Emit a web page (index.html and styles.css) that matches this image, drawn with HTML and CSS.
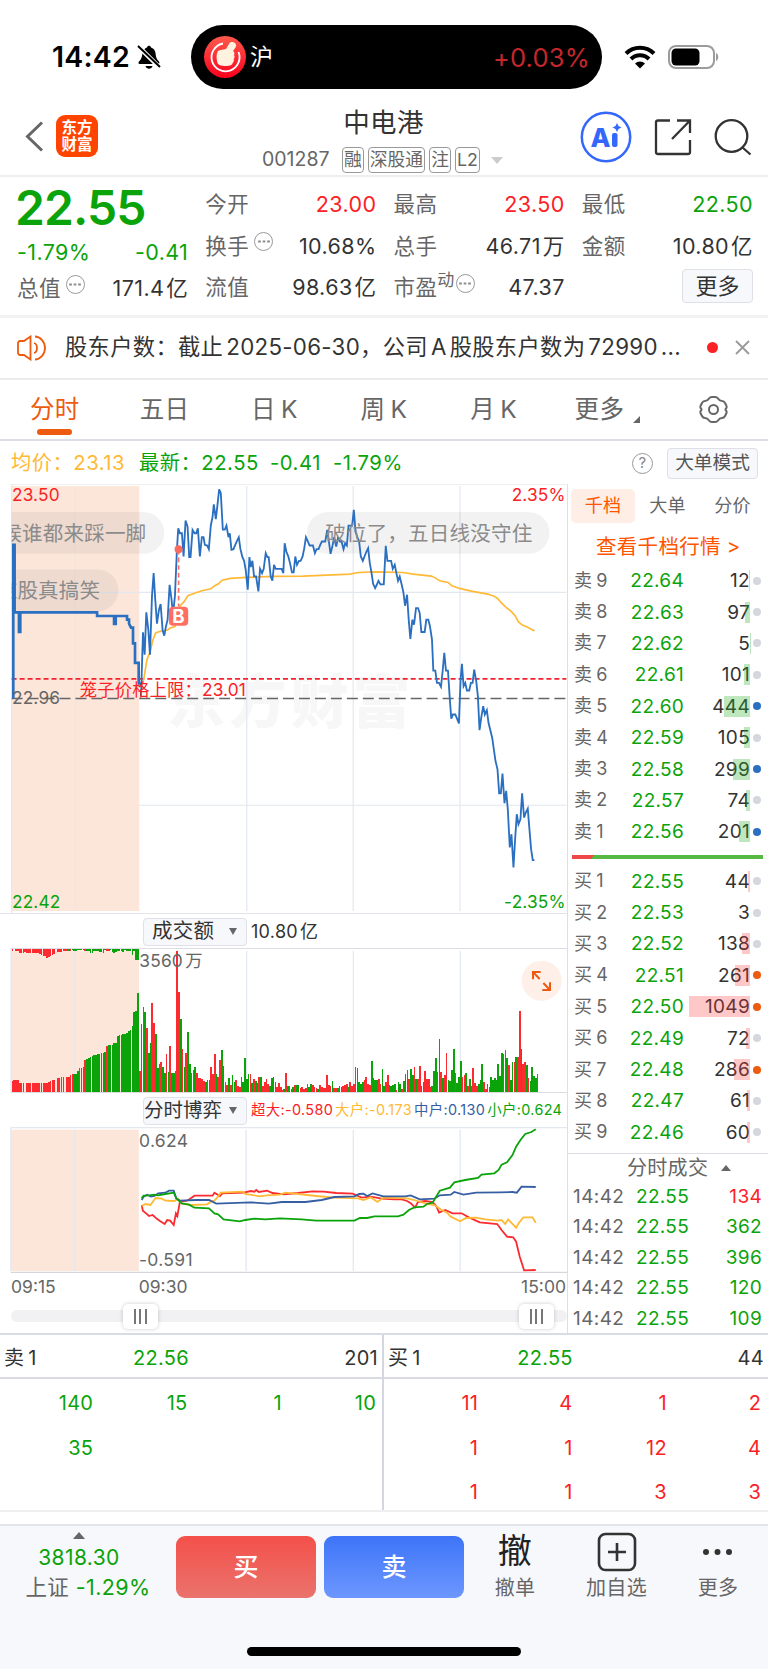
FILE: index.html
```html
<!DOCTYPE html>
<html lang="zh-CN">
<head>
  <meta charset="UTF-8">
  <meta name="viewport" content="width=device-width, initial-scale=1.0">
  <title>中电港 001287</title>
  <link rel="stylesheet" href="styles.css">
</head>
<body>
  <div class="status">
    <span class="time">14:42</span>
    <svg class="bell" width="24" height="26" viewBox="0 0 24 26">
      <path d="M3 20c-2 0-2-1.500-.5-3C5 14 5 12 5.500 9 6 5.500 8.500 4 10 3.500c.5-2.500 3.500-2.500 4 0 2 .5 4.200 2.500 4.500 5.500.4 4 1 6 3 8 1.500 1.500 1 3-.5 3z"/>
      <path d="M8.500 22h7c-.8 3.500-6.200 3.500-7 0z"/>
      <path d="M1 2l22 22" stroke="#fff" stroke-width="4.500"/>
      <path d="M1 2l22 21" stroke="#000" stroke-width="2"/>
    </svg>
    <div class="island">
      <svg width="42" height="42" viewBox="0 0 42 42">
        <defs><linearGradient id="thumb" x1="0" y1="0" x2="0" y2="1"><stop offset="0" stop-color="#ff5a4c"/><stop offset="1" stop-color="#f8001d"/></linearGradient></defs>
        <circle cx="21" cy="21" r="21" fill="url(#thumb)"/>
        <path d="M19 7.500A14 14 0 1 0 34.500 16" fill="none" stroke="#fff" stroke-width="1.800"/>
        <path d="M14 15c2-1.500 5-1 8-2l3-5c1-2 3-2.500 5-1.500 2.500 1 2.500 3 1.500 5L29 15c2 1.500 1.500 3 1 4 1 1.500.5 3-.3 4 .5 1.500 0 3-.9 3.700C28.500 29 26 30 22 30c-5 0-8.500-.5-9-5-.6-3-.8-7 1-10z" fill="#fff3df"/>
      </svg>
      <span class="hu">沪</span>
      <span class="hu-change">+0.03%</span>
    </div>
    <svg class="wifi" width="32" height="24" viewBox="0 0 32 24">
      <path d="M2 8.500a20 20 0 0 1 28 0M7 14a12.800 12.800 0 0 1 18 0" fill="none" stroke="#000" stroke-width="4"/>
      <path d="M16 23.500l-5-5a7 7 0 0 1 10 0z"/>
    </svg>
    <svg class="battery" width="52" height="24" viewBox="0 0 52 24">
      <rect x="1" y="1" width="45" height="22" rx="7" fill="none" stroke="#9b9b9b" stroke-width="2"/>
      <rect x="3.500" y="3.500" width="28" height="17" rx="4.500"/>
      <path d="M48 8c3 1 3 7 0 8z" fill="#9b9b9b"/>
    </svg>
  </div>

  <header class="header">
    <svg class="back" width="19" height="31" viewBox="0 0 19 31"><path d="M17 1.500L2.500 15.500 17 29.500" fill="none" stroke="#666" stroke-width="3"/></svg>
    <div class="logo">东方<br>财富</div>
    <div class="title">
      <h1>中电港</h1>
      <div class="code"><span>001287</span><i>融</i><i>深股通</i><i>注</i><i>L2</i><b class="caret"></b></div>
    </div>
    <svg class="tools" width="172" height="52" viewBox="0 0 172 52">
      <circle cx="26" cy="26" r="24.200" fill="none" stroke="#3468fb" stroke-width="2.500"/>
      <text x="10.500" y="36" class="ai">A</text>
      <rect x="32" y="22" width="5.500" height="14" rx="2" fill="#3468fb"/>
      <path d="M37 12l1.500 3 3 1.500-3 1.500-1.500 3-1.500-3-3-1.500 3-1.500z" fill="#3468fb"/>
      <g fill="none" stroke="#333" stroke-width="2.300">
        <path d="M90 9.500H78a2 2 0 0 0-2 2V41a2 2 0 0 0 2 2h30a2 2 0 0 0 2-2V29M97 9.500h13V22M109.500 10L92 28"/>
        <circle cx="151.500" cy="25" r="15.800"/>
        <path d="M162.500 36.500l8 7"/>
      </g>
    </svg>
  </header>

  <section class="quote">
    <div class="col">
      <strong class="last">22.55</strong>
      <p class="green change"><span>-1.79%</span><span>-0.41</span></p>
      <p><label>总值<i class="dots"></i></label><span>171.4<em>亿</em></span></p>
    </div>
    <div class="col">
      <p><label>今开</label><span class="red">23.00</span></p>
      <p><label>换手<i class="dots"></i></label><span>10.68%</span></p>
      <p><label>流值</label><span>98.63<em>亿</em></span></p>
    </div>
    <div class="col">
      <p><label>最高</label><span class="red">23.50</span></p>
      <p><label>总手</label><span>46.71<em>万</em></span></p>
      <p><label>市盈<sup>动</sup><i class="dots tight"></i></label><span>47.37</span></p>
    </div>
    <div class="col">
      <p><label>最低</label><span class="green">22.50</span></p>
      <p><label>金额</label><span>10.80<em>亿</em></span></p>
      <p class="end"><button class="btn more">更多</button></p>
    </div>
  </section>

  <div class="notice">
    <svg width="30" height="26" viewBox="0 0 30 26" fill="none" stroke="#ee5a0f" stroke-width="1.800">
      <path d="M13.500 1.500v23L7 20H3a2 2 0 0 1-2-2V8a2 2 0 0 1 2-2h4zM17 8c4 1 4 9 0 10M18 1.500c5 0 10 5 10 11.500s-5 11.500-10 11.500"/>
    </svg>
    <span class="notice-text">股东户数：截止 2025-06-30，公司 A 股股东户数为 72990 ...</span>
    <b class="reddot"></b>
    <svg width="15" height="15" viewBox="0 0 15 15"><path d="M1 1l13 13M14 1L1 14" stroke="#999" stroke-width="1.800"/></svg>
  </div>

  <nav class="tabs">
    <a class="active">分时</a><a>五日</a><a>日 K</a><a>周 K</a><a>月 K</a><a class="tab-more">更多<b class="corner"></b></a>
    <a><svg width="29" height="27" viewBox="0 0 29 27" fill="none" stroke="#666" stroke-width="2">
      <path d="M10 2.500Q11 1 13 1h3q2 0 3 1.500Q20.500 5 23 5q2 0 3 2l1.300 2.500q.8 2-.3 3-1 1 0 2 1.100 1 .3 3L26 20q-1 2-3 2-2.500 0-4 2.500-1 1.500-3 1.500h-3q-2 0-3-1.500Q8.500 22 6 22q-2 0-3-2l-1.300-2.500q-.8-2 .3-3 1-1 0-2-1.100-1-.3-3L3 7q1-2 3-2 2.500 0 4-2.500z"/><circle cx="14.500" cy="13.500" r="4.500"/>
    </svg></a>
  </nav>

  <div class="info">
    <span class="avg">均价：23.13</span>
    <span class="green newest">最新：22.55</span><span class="green delta">-0.41</span><span class="green delta">-1.79%</span>
    <b class="help">?</b>
    <button class="btn mode">大单模式</button>
  </div>

  <main class="market">
    <div class="charts">
      <svg class="price" viewBox="0 12 1701 1290">
        <path d="M33 12H1701" stroke="#e9e9ea" stroke-width="5"/>
        <rect x="33" y="18" width="384" height="1278" fill="#fce6da"/>
        <text class="mark" x="500" y="732">东方财富</text>
        <path class="grid" d="M33 12V1302M225 18V1296M740 18V1296M1060 18V1296M1381 18V1296M33 338H1701M417 978H1701"/>
        <clipPath id="area"><rect x="33" y="12" width="1668" height="1290"/></clipPath>
        <g clip-path="url(#area)">
          <rect class="pill" x="-90" y="96" width="582" height="126" rx="63"/>
          <rect class="pill" x="-90" y="269" width="444" height="126" rx="63"/>
          <rect class="pill" x="921" y="96" width="729" height="126" rx="63"/>
          <text class="say" x="2" y="182">候谁都来踩一脚</text>
          <text class="say" x="-12" y="355">这股真搞笑</text>
        </g>
        <path d="M33 598H1701" stroke="#f5222d" stroke-width="5" stroke-dasharray="15 9"/>
        <path d="M33 657H1701" stroke="#666" stroke-width="5" stroke-dasharray="33 15"/>
        <polyline fill="none" stroke="#ffb935" stroke-width="5" points="421,625 430,600 440,540 450,515 458,480 466,460 480,455 500,452 510,445 524,441 530,400 540,378 552,365 563,348 585,340 605,333 632,327 645,317 655,312 665,302 690,296 740,293 820,290 910,289 980,286 1050,283 1075,278 1130,276 1210,278 1240,283 1295,289 1308,295 1320,303 1345,308 1357,318 1380,326 1415,334 1465,343 1485,350 1495,357 1505,369 1520,383 1535,395 1547,408 1557,427 1570,437 1585,443 1605,454"/>
        <polyline class="line pre" points="38,657 38,195 42,195 42,398 55,398 55,457 59,457 59,398 290,398 290,409 341,409 341,433 346,433 346,409 380,409 380,420 386,420 386,432 392,444 398,444 398,491 404,491 404,550 415,550 415,612 423,612"/>
        <polyline class="line" points="422,650 428,458 433,525 438,398 444,450 449,525 455,350 460,280 465,362 470,432 476,390 481,373 487,452 492,468 497,440 502,420 508,315 514,360 518,405 524,350 530,210 534,145 539,160 545,160 550,230 556,122 562,140 567,232 571,232 577,150 583,160 588,160 593,145 599,230 605,172 610,172 614,195 621,197 626,208 632,136 637,112 641,73 647,118 652,75 657,28 662,40 668,149 674,149 679,137 685,172 689,160 694,210 700,208 705,196 711,182 716,172 721,208 727,232 732,243 737,272 743,330 748,232 752,262 757,243 762,290 768,290 775,335 780,267 786,280 791,267 797,220 802,232 806,232 812,290 817,303 822,255 827,267 845,267 850,280 854,190 859,215 865,230 870,250 876,278 881,278 886,230 891,255 897,243 902,243 908,230 913,205 918,172 924,185 929,197 939,197 945,220 950,208 956,208 961,195 966,185 976,185 982,150 987,185 992,222 998,197 1003,172 1009,200 1014,175 1020,185 1025,185 1031,208 1036,190 1041,197 1046,137 1057,137 1062,90 1067,155 1073,172 1078,185 1083,230 1089,243 1094,230 1100,215 1105,205 1110,250 1115,278 1120,312 1126,325 1131,315 1136,303 1142,314 1152,314 1158,198 1163,243 1174,243 1179,267 1185,255 1190,280 1195,303 1200,290 1206,315 1211,338 1216,378 1222,345 1227,420 1232,478 1238,420 1243,435 1249,385 1255,385 1260,400 1265,457 1275,457 1280,420 1286,420 1291,440 1297,480 1301,573 1307,573 1312,610 1318,610 1324,622 1329,575 1334,520 1339,573 1345,573 1350,650 1355,718 1360,705 1367,705 1372,717 1378,732 1383,600 1387,553 1392,620 1397,610 1402,633 1409,633 1414,610 1419,610 1424,570 1430,605 1435,650 1440,752 1445,715 1451,680 1456,705 1462,692 1467,730 1478,775 1483,810 1488,845 1494,870 1499,942 1504,942 1509,883 1515,972 1520,935 1525,990 1531,1105 1536,1065 1542,1165 1547,1080 1552,1005 1557,1035 1563,1020 1568,942 1574,1015 1579,1000 1585,988 1590,1050 1595,1110 1600,1143 1605,1143"/>
        <text class="say" x="976" y="182">破位了，五日线没守住</text>
        <path d="M535 210V380" stroke="#ff6f61" stroke-width="5" stroke-dasharray="14 9"/>
        <circle cx="535" cy="208" r="12" fill="#fb6a5c"/>
        <rect x="506" y="381" width="58" height="57" rx="12" fill="#ff6f61"/>
        <text class="buy-mark" x="516" y="429">B</text>
        <text class="tick red" x="34" y="63">23.50</text>
        <text class="tick red right" x="1699" y="63">2.35%</text>
        <text class="tick" x="34" y="675">22.96</text>
        <text class="tick red" x="238" y="650">笼子价格上限：23.01</text>
        <text class="tick green" x="34" y="1286">22.42</text>
        <text class="tick green right" x="1699" y="1286">-2.35%</text>
      </svg>

      <div class="panel-head">
        <div class="select">成交额<b></b></div>
        <span class="amount">10.80<em>亿</em></span>
      </div>
      <svg class="volume" viewBox="0 114 1701 435">
        <rect x="33" y="122" width="384" height="427" fill="#fce6da"/>
        <path class="grid" d="M33 114V549M225 122V548M740 122V548M1060 122V548M1381 122V548"/>
        <path d="M33 115H1701M33 548H1701" stroke="#dcdce2" stroke-width="4"/>
        <g id="bars" shape-rendering="crispEdges"></g>
        <text class="tick spaced" x="418" y="172">3560 万</text>
        <circle cx="1625" cy="212" r="60" fill="#fef0e9"/>
        <path d="M1599 208V186H1622M1599 186L1619 207M1650 217V240H1627M1650 240L1630 219" fill="none" stroke="#ee5a0f" stroke-width="6"/>
      </svg>

      <div class="panel-head">
        <div class="select wide">分时博弈<b></b></div>
        <div class="legend"><span class="red">超大:-0.580</span><span class="c-big">大户:-0.173</span><span class="c-mid">中户:0.130</span><span class="green">小户:0.624</span></div>
      </div>
      <div class="flow-wrap">
        <svg class="flow" viewBox="0 111 1560 438" preserveAspectRatio="none">
          <rect x="30" y="119" width="352" height="424" fill="#fce6da"/>
          <path class="grid" d="M30 112V543M206 119V543M677 119V543M972 119V543M1266 119V543M30 113H1560"/>
          <path d="M30 547H1560" stroke="#d5d5dc" stroke-width="4"/>
          <polyline stroke="#fb2b30" points="390,345 393,362 402,370 410,378 420,375 430,385 440,393 453,402 460,390 468,392 478,405 484,370 488,378 495,335 515,332 525,325 535,317 585,317 590,308 605,318 612,310 670,308 690,303 700,305 705,300 712,306 735,302 750,309 780,313 820,309 860,304 890,305 925,309 970,311 995,323 1020,320 1050,326 1085,328 1105,328 1120,333 1130,340 1142,352 1150,336 1170,333 1190,336 1200,348 1208,368 1225,360 1245,370 1270,370 1290,382 1320,397 1368,402 1380,420 1395,440 1412,442 1420,455 1430,500 1442,541 1474,540"/>
          <polyline stroke="#ffb935" points="390,348 400,342 414,345 428,324 445,326 455,332 480,333 490,326 500,340 525,345 570,343 580,335 590,332 600,320 607,308 668,305 675,312 715,319 735,316 770,314 785,308 805,310 870,318 920,323 985,325 1000,330 1020,322 1038,336 1055,323 1120,325 1140,330 1170,340 1195,345 1215,360 1230,368 1240,380 1266,394 1282,384 1310,383 1335,388 1370,392 1380,390 1390,402 1398,388 1420,413 1428,398 1440,382 1465,382 1474,398"/>
          <polyline stroke="#365fa3" points="390,330 395,320 405,314 415,320 425,318 435,310 455,308 465,302 478,302 485,325 495,332 540,330 575,330 595,341 690,337 740,341 775,336 840,336 885,330 920,321 975,319 988,312 1000,311 1010,318 1025,310 1055,319 1115,319 1130,316 1155,328 1195,326 1210,316 1240,314 1250,306 1275,314 1310,308 1375,307 1410,306 1422,308 1435,290 1474,291"/>
          <polyline stroke="#0aa30a" points="390,325 395,317 410,316 425,314 435,316 455,312 478,308 485,325 500,340 520,344 535,353 575,355 590,370 600,373 615,388 660,394 675,390 700,386 730,388 770,385 830,388 870,392 950,392 975,392 990,384 1010,384 1030,379 1095,379 1110,374 1125,360 1140,352 1165,350 1175,342 1190,338 1210,302 1238,293 1250,277 1280,270 1315,264 1325,254 1360,250 1372,240 1380,224 1395,217 1410,195 1420,170 1432,150 1445,132 1462,126 1474,118"/>
        </svg>
        <span class="hi">0.624</span>
        <span class="lo">-0.591</span>
      </div>
      <div class="axis"><span>09:15</span><span class="open">09:30</span><span class="close">15:00</span></div>
      <div class="slider"><b class="thumb"></b><b class="thumb"></b></div>
    </div>

    <aside class="book">
      <div class="book-tabs"><a class="active">千档</a><a>大单</a><a>分价</a></div>
      <div class="book-link">查看千档行情 &gt;</div>
      <div id="sells"></div>
      <div class="ratio"></div>
      <div id="buys"></div>
      <div class="deals">
        <div class="deals-head">分时成交<b></b></div>
        <div id="deals"></div>
      </div>
    </aside>
  </main>

  <section class="queue">
    <div class="side">
      <div class="side-head"><span>卖 1</span><span class="green">22.56</span><span>201</span></div>
      <div class="cells green"><span>140</span><span>15</span><span>1</span><span>10</span><span>35</span></div>
    </div>
    <div class="side">
      <div class="side-head"><span>买 1</span><span class="green">22.55</span><span>44</span></div>
      <div class="cells red"><span>11</span><span>4</span><span>1</span><span>2</span><span>1</span><span>1</span><span>12</span><span>4</span><span>1</span><span>1</span><span>3</span><span>3</span></div>
    </div>
  </section>

  <footer class="bottom">
    <div class="index">
      <b></b>
      <span class="green">3818.30</span>
      <span>上证 <em class="green">-1.29%</em></span>
    </div>
    <button class="trade buy">买</button>
    <button class="trade sell">卖</button>
    <div class="action"><span class="glyph">撤</span>撤单</div>
    <div class="action add">
      <svg width="40" height="40" viewBox="0 0 40 40" fill="none" stroke="#333" stroke-width="2.600"><rect x="2" y="2" width="36" height="36" rx="6.500"/><path d="M20 11v18M11 20h18"/></svg>加自选
    </div>
    <div class="action">
      <svg width="40" height="40" viewBox="0 0 40 40" fill="#333"><circle cx="8" cy="20" r="3"/><circle cx="19.500" cy="20" r="3"/><circle cx="31" cy="20" r="3"/></svg>更多
    </div>
    <div class="home"></div>
  </footer>

  <script src="chart.js"></script>
</body>
</html>
```

FILE: styles.css
```css
* {
  box-sizing: border-box;
}
body {
  margin: 0;
  width: 768px;
  height: 1669px;
  overflow: hidden;
  background: #fff;
  color: #333;
  font-family: Inter, "Noto Sans CJK SC", sans-serif;
  font-size: 20px;
  letter-spacing: 0.3px;
  line-height: 1;
}
p, h1 {
  margin: 0;
}
i, em {
  font-style: normal;
}
button {
  font-family: inherit;
  padding: 0;
}
svg {
  display: block;
  flex: none;
}
.green { color: #0aa30a; fill: #0aa30a; }
.red { color: #fb2226; fill: #fb2226; }

/* status bar */
.status {
  display: flex;
  align-items: center;
  height: 98px;
  padding: 15px 48px 0 52px;
}
.time {
  width: 85px;
  padding-top: 2px;
  font-size: 28.500px;
  font-weight: 600;
  letter-spacing: 0.2px;
  color: #000;
}
.island {
  display: flex;
  align-items: center;
  width: 411px;
  height: 64px;
  margin: 0 22px 0 30px;
  padding: 0 12px 0 13px;
  border-radius: 32px;
  background: #000;
}
.hu {
  margin: 2px 0 0 4px;
  font-size: 23px;
  color: #fff;
}
.hu-change {
  margin: 2px 0 0 auto;
  font-size: 25.500px;
  letter-spacing: 0.2px;
  color: #c4272b;
}
.battery {
  margin-left: 12px;
}

/* header */
.header {
  display: flex;
  align-items: flex-start;
  height: 79px;
  padding: 13px 16px 0 25px;
  border-bottom: 2px solid #eeeeef;
}
.back {
  margin-top: 10px;
}
.logo {
  width: 42px;
  height: 42px;
  margin: 4px 0 0 12px;
  padding-top: 4px;
  border-radius: 9px;
  background: #ff4400;
  color: #fff;
  font-size: 15.500px;
  font-weight: 700;
  letter-spacing: 0;
  line-height: 17px;
  text-align: center;
}
.title {
  flex: 1;
  width: 0;
  margin-left: 164px;
}
.title h1 {
  width: 243px;
  margin: -3px 0 11px;
  font-size: 26.500px;
  font-weight: 400;
  text-align: center;
  line-height: 28px;
}
.code {
  display: flex;
  align-items: center;
  width: 260px;
  font-size: 19.500px;
  color: #666;
}
.code span {
  width: 75px;
  margin-right: 5px;
  letter-spacing: 0;
}
.code i {
  height: 26px;
  margin-right: 4px;
  padding: 0 1px;
  border: 1.500px solid #999;
  border-radius: 4px;
  font-size: 17.800px;
  letter-spacing: 0;
  line-height: 24px;
}
.caret {
  margin-left: 7px;
  border: 6px solid transparent;
  border-top: 7px solid #ccc;
  border-bottom: 0;
}
.ai {
  font-size: 26px;
  font-weight: 800;
  fill: #3468fb;
}

/* quote */
.quote {
  display: grid;
  grid-template-columns: repeat(4, 1fr);
  gap: 17px;
  height: 141px;
  padding: 7px 15px 0 17px;
  border-bottom: 3px solid #f2f2f3;
}
.col p {
  display: flex;
  align-items: center;
  justify-content: space-between;
  height: 41.500px;
  font-size: 21.500px;
  letter-spacing: 0.4px;
  white-space: nowrap;
}
.col em, .amount em {
  margin-left: 2px;
}
.col label {
  display: flex;
  align-items: center;
  color: #666;
  font-size: 21.500px;
}
.col .end {
  justify-content: flex-end;
}
.last {
  display: block;
  height: 50px;
  margin-left: -2px;
  font-size: 48px;
  line-height: 47px;
  font-weight: 600;
  letter-spacing: -0.900px;
  color: #0aa30a;
}
.col .change {
  height: 34px;
  padding-top: 3px;
}
.dots {
  width: 19px;
  height: 19px;
  margin: -9px 0 0 5px;
  border: 1.500px solid #999;
  border-radius: 50%;
  background: radial-gradient(circle, #888 1px, transparent 1.500px) center / 4.500px 20px repeat-x content-box;
  padding: 0 1.500px;
}
.dots.tight {
  margin-left: 1px;
}
.col sup {
  margin-top: -14px;
  font-size: 17px;
}
.btn {
  border: 1.500px solid #dfdfe7;
  border-radius: 4px;
  background: #f7f8fb;
  color: #333;
}
.more {
  width: 71px;
  height: 34px;
  margin-top: -4px;
  font-size: 22px;
  line-height: 30px;
}

/* notice */
.notice {
  display: flex;
  align-items: center;
  height: 62px;
  padding: 0 18px 1px 17px;
  border-bottom: 2px solid #ebebed;
}
.notice-text {
  width: 630px;
  margin-left: 18px;
  font-size: 22.300px;
  word-spacing: -3.500px;
  white-space: nowrap;
}
.reddot {
  width: 11px;
  height: 11px;
  margin: 0 17px 0 13px;
  border-radius: 50%;
  background: #fb2226;
  flex: none;
}

/* tabs */
.tabs {
  display: grid;
  grid-template-columns: repeat(7, 1fr);
  height: 61px;
  border-bottom: 2px solid #dedfe6;
}
.tabs a {
  position: relative;
  display: flex;
  align-items: center;
  justify-content: center;
  font-size: 24.500px;
  word-spacing: -2px;
  color: #666;
}
.tabs .active {
  color: #ee5a0f;
}
.tabs .active::after {
  content: "";
  position: absolute;
  bottom: 4px;
  width: 35px;
  height: 6px;
  border-radius: 3px;
  background: #ee5a0f;
}
.tabs .tab-more {
  padding-right: 8px;
}
.corner {
  position: absolute;
  right: 18px;
  bottom: 16px;
  border-left: 7px solid transparent;
  border-bottom: 7px solid #666;
}

/* info line */
.info {
  display: flex;
  align-items: center;
  height: 43px;
  padding: 1px 10px 0 11px;
  font-size: 20.300px;
  letter-spacing: 0.5px;
  white-space: nowrap;
}
.avg { color: #ffb935; width: 128px; }
.newest { width: 119px; }
.delta { margin-left: 12px; }
.help {
  width: 21px;
  height: 21px;
  margin: 0 14px 0 auto;
  border: 1.500px solid #999;
  border-radius: 50%;
  font-size: 15px;
  font-weight: 400;
  line-height: 18px;
  text-align: center;
  color: #888;
}
.mode {
  width: 91px;
  height: 31px;
  font-size: 18.700px;
  line-height: 26px;
  color: #555;
}

/* charts */
.market {
  display: flex;
  height: 849px;
}
.charts {
  width: 568px;
  border-right: 1px solid #dedfe6;
}
.price {
  width: 567px;
  height: 430px;
  border-bottom: 1px solid #e3e4ea;
}
.volume {
  width: 567px;
  height: 145px;
}
.grid {
  fill: none;
  stroke: #e2e7f0;
  stroke-width: 3.500;
}
.line {
  fill: none;
  stroke: #2b6fc0;
  stroke-width: 5.500;
}
.pre {
  stroke-width: 8;
}
.mark {
  font-size: 174px;
  font-weight: 900;
  letter-spacing: 12px;
  fill: #f7f7f7;
}
.pill {
  fill: rgba(60, 60, 60, 0.065);
}
.say {
  font-size: 61.800px;
  letter-spacing: 0.5px;
  fill: #8b8b8b;
}
.tick {
  font-size: 52px;
  letter-spacing: 0.5px;
  fill: #666;
}
.spaced {
  word-spacing: -8px;
}
.tick.red { fill: #fb2226; }
.tick.green { fill: #0aa30a; }
.right {
  text-anchor: end;
}
.buy-mark {
  font-size: 56px;
  font-weight: 700;
  fill: #fff;
}
.panel-head {
  display: flex;
  align-items: center;
  height: 34px;
  padding: 1px 0 0 143px;
}
.select {
  display: flex;
  align-items: center;
  justify-content: space-between;
  width: 104px;
  height: 28px;
  padding: 0 9px 0 8px;
  border: 1.500px solid #dfe0e8;
  border-radius: 4px;
  background: #f7f8fb;
  font-size: 20.500px;
}
.select.wide {
  padding: 0 9px 0 0;
  font-size: 19.500px;
  letter-spacing: 0;
}
.select b {
  border: 4px solid transparent;
  border-top: 7px solid #666;
  border-bottom: 0;
}
.amount {
  margin-left: 4px;
  font-size: 18px;
}
.legend {
  display: flex;
  gap: 2px;
  margin-left: 4px;
  font-size: 14.400px;
  letter-spacing: 0.35px;
  white-space: nowrap;
}
.c-big { color: #ffb935; }
.c-mid { color: #365fa3; }
.flow-wrap {
  position: relative;
  height: 146px;
  font-size: 17.500px;
  color: #666;
}
.flow {
  width: 567px;
  height: 146px;
}
.flow polyline {
  fill: none;
  stroke-width: 1.800;
  vector-effect: non-scaling-stroke;
}
.hi, .lo {
  position: absolute;
  left: 139px;
}
.hi { top: 5px; }
.lo { bottom: 5px; }
.axis {
  display: flex;
  height: 30px;
  padding: 5px 1px 0 11px;
  font-size: 17.500px;
  letter-spacing: 0;
  color: #666;
}
.open {
  margin-left: 83px;
}
.close {
  margin-left: auto;
}
.slider {
  display: flex;
  align-items: center;
  justify-content: space-between;
  height: 12px;
  margin: 7px 0 0 11px;
  padding: 0 13px 0 112px;
  border-radius: 6px;
  background: #f1f1f4;
}
.thumb {
  width: 35px;
  height: 25px;
  padding: 5px 11px;
  border-radius: 5px;
  background: repeating-linear-gradient(90deg, #777 0 2px, transparent 2px 5.500px) content-box, #fff;
  box-shadow: 0 0 4px rgba(0, 0, 0, 0.2);
}

/* order book */
.book {
  width: 200px;
}
.book-tabs {
  display: flex;
  align-items: center;
  height: 34px;
  margin: 5px 0 0 3px;
  font-size: 18px;
  color: #666;
}
.book-tabs a {
  width: 64px;
  line-height: 34px;
  border-radius: 5px;
  text-align: center;
}
.book-tabs .active {
  background: #feeee6;
  color: #ff5500;
}
.book-tabs a + a {
  width: 65px;
}
.book-link {
  height: 42px;
  padding-left: 28px;
  font-size: 20.500px;
  line-height: 48px;
  color: #ff5500;
  white-space: nowrap;
}
.row {
  display: flex;
  align-items: center;
  height: 31.400px;
  padding: 0 7px 0 6px;
  font-size: 19px;
}
.row .name {
  width: 45px;
  color: #666;
  font-size: 18px;
  word-spacing: -1.500px;
}
.row .price-cell {
  width: 65px;
  text-align: right;
}
.row .num {
  position: relative;
  width: 66px;
  height: 21px;
  text-align: right;
  line-height: 21px;
}
.num u {
  position: absolute;
  right: 0;
  top: 0;
  height: 21px;
}
#sells u { background: rgba(40, 175, 40, 0.3); }
#buys u { background: rgba(250, 50, 50, 0.27); }
.row .dot {
  width: 8px;
  height: 8px;
  margin-left: 3px;
  border-radius: 50%;
  background: #d5d7de;
}
#sells .big { background: #2b6fc0; }
#buys .big { background: #ee5a0f; }
.ratio {
  height: 4px;
  margin: 7px 5px 7px 4px;
  background: linear-gradient(120deg, #ee4848 0 19px, #57b944 19px);
}
.deals {
  margin-top: 5px;
  border-top: 1.500px solid #dcdce2;
}
.deals-head {
  display: flex;
  align-items: center;
  height: 27px;
  padding-left: 59px;
  font-size: 20px;
  color: #666;
}
.deals-head b {
  margin-left: 13px;
  border: 5px solid transparent;
  border-bottom: 6px solid #666;
  border-top: 0;
}
.deal {
  display: flex;
  align-items: center;
  height: 30.500px;
  padding: 0 6px 0 5px;
  font-size: 19px;
}
.deal span:first-child {
  width: 63px;
  font-size: 19px;
  letter-spacing: 0.4px;
  color: #666;
}
.deal span:last-child {
  margin-left: auto;
}

/* queue */
.queue {
  display: flex;
  height: 179px;
  border-top: 2px solid #d9dce4;
  border-bottom: 2px solid #f0f0f2;
}
.side {
  width: 384px;
}
.side:first-child {
  border-right: 2px solid #d5d7e0;
}
.side-head {
  display: grid;
  grid-template-columns: 94px 1fr 94px;
  align-items: center;
  height: 44px;
  padding: 3px 4px 0;
  border-bottom: 2px solid #d9dae3;
  word-spacing: -2px;
}
.side-head span:nth-child(2) {
  width: 126px;
  text-align: center;
}
.side-head span:last-child { text-align: right; }
.cells {
  display: grid;
  grid-template-columns: repeat(4, 94.300px);
  grid-auto-rows: 44.500px;
  align-items: center;
  padding-top: 2px;
}
.side:first-child .cells {
  margin-left: -1px;
}
.cells span {
  text-align: right;
}

/* bottom bar */
.bottom {
  display: flex;
  flex-wrap: wrap;
  align-content: flex-start;
  height: 145px;
  margin-top: 12px;
  padding: 6px 0 0 17px;
  border-top: 2px solid #e1e4ea;
  background: #f7f8fb;
}
.index {
  display: flex;
  flex-direction: column;
  align-items: center;
  gap: 9px;
  width: 142px;
  font-size: 21.500px;
  letter-spacing: 0.4px;
  color: #666;
  white-space: nowrap;
}
.index b {
  margin: 0 18px -1px 0;
  border: 6px solid transparent;
  border-bottom: 7px solid #666;
  border-top: 0;
}
.index b + span {
  margin: 0 18px 0 0;
  font-size: 21px;
}
.trade {
  width: 140px;
  height: 62px;
  margin: 4px 8px 0 0;
  border: 0;
  border-radius: 9px;
  color: #fff;
  font-size: 25px;
  line-height: 58px;
  font-weight: 500;
}
.index + .trade {
  margin-left: 17px;
}
.buy { background: linear-gradient(#f4504a, #ea736c); }
.sell { background: linear-gradient(#3d74f8, #6d97fe); }
.action {
  display: flex;
  flex-direction: column;
  align-items: center;
  gap: 6px;
  width: 86px;
  font-size: 20px;
  color: #666;
}
.action.add {
  width: 117px;
}
.glyph {
  height: 40px;
  font-size: 34px;
  line-height: 38px;
  color: #222;
}
.home {
  width: 274px;
  height: 9px;
  margin: 48px 0 0 230px;
  border-radius: 5px;
  background: #000;
}
```

FILE: chart.js
```js
// colour letter + top of the bar, baseline is 546
const minute = 'r482 g341 r290 g305 r355 g428 g398 r278 r340 g371 g475 r461 r455 g471 g489 r432 g487 r407 g488 g490 r483 r122 r246 g328 r417 g470 r429 g366 g462 r489 r480 g472 r489 r503 r505 r506 r514 g517 r511 g509 r471 r492 r431 g492 r502 r450 g419 g468 r517 r525 g503 r525 g495 g515 r511 r527 r531 g501 g516 g443 g507 g493 r491 g520 r507 g514 r518 r502 g502 r529 r517 r508 r521 g528 g504 g502 g517 r531 r520 r530 r541 g537 r490 g527 g527 g537 g530 r526 g525 g525 r535 r531 r537 r533 r521 g531 g523 r526 r530 r533 g536 r525 r531 r535 r533 r496 r526 r528 g512 r533 r533 g535 r527 g530 r528 r526 r521 g531 r515 r529 r523 r472 g475 g516 g522 g515 r509 r502 r522 r524 g453 g503 g511 g509 r506 r521 g477 g528 r516 r496 g524 g528 g526 g521 r539 g515 g521 r537 g514 g492 g479 r508 g477 g494 r471 g508 r506 r469 g527 g516 r483 r507 r507 r531 g528 g483 g444 r487 g388 r485 g503 r496 r430 g510 g513 g479 g418 r488 g520 g501 g453 r502 r496 g488 r528 g507 r528 r475 r518 r528 g521 g509 g463 r515 r537 g521 r531 g500 g509 g503 g509 g461 g499 g429 r432 r421 g443 r464 g511 g457 r455 g441 r440 r304 g418 r463 r456 g465 r504 g514 g471 g498 g503 r491';
const auction = 'r512 r511 r511 r511 r520 r519 r519 r546 r518 r518 r518 r518 r518 r518 r518 r518 r518 r518 r518 r518 r516 r513 r510 r510 r546 r505 r505 r501 r500 r546 r500 r500 r496 r493 g491 g491 g482 r475 r474 r471 r450 g447 g443 g440 g438 g436 g436 g433 g432 g430 g429 g427 r408 g406 g406 g405 g398 g398 g378 g376 g374 g373 g371 g369 g364 g360 g348 g305 g303 g250';
const unmatched = 'r122 r117 r124 r122 r128 r128 r128 r127 r128 r128 r128 r128 r129 r129 r130 r132 r135 r137 r138 r143 r140 r137 r136 r132 r117 r127 r127 r125 r122 r122 r122 g123 r122 g121 g123 g124 g121 g121 r121 g121 r122 g122 g122 g128 g130 g124 g122 g124 g125 g126 g128 g121 r122 r122 g121 g126 g128 g125 g122 g124 g124 g125 g121 g122 g122 g124 g134 g124 g150 g150';

const colours = { r: '#fb2b30', g: '#0aa30a' };
const rects = [];
function draw(list, x0, pitch, width, fromTop) {
  list.split(' ').forEach((item, i) => {
    const v = +item.slice(1);
    const y = fromTop ? 117 : v;
    const h = fromTop ? v - 117 : 546 - v;
    rects.push(`<rect x="${x0 + i * pitch}" y="${y}" width="${width}" height="${h}" fill="${colours[item[0]]}"/>`);
  });
}
draw(minute, 417, 5.35, 5, false);
draw(auction, 35, 5.45, 4.7, false);
draw(unmatched, 35, 5.45, 4.9, true);
document.getElementById('bars').innerHTML = rects.join('');

// name, price, volume, bar width, highlighted dot
const sells = [['卖 9', '22.64', 12, 1], ['卖 8', '22.63', 97, 5], ['卖 7', '22.62', 5, 0.5], ['卖 6', '22.61', 101, 6], ['卖 5', '22.60', 444, 26, 1], ['卖 4', '22.59', 105, 6], ['卖 3', '22.58', 299, 17, 1], ['卖 2', '22.57', 74, 4], ['卖 1', '22.56', 201, 11, 1]];
const buys = [['买 1', '22.55', 44, 2], ['买 2', '22.53', 3, 0], ['买 3', '22.52', 138, 8], ['买 4', '22.51', 261, 15, 1], ['买 5', '22.50', 1049, 61, 1], ['买 6', '22.49', 72, 4], ['买 7', '22.48', 286, 16, 1], ['买 8', '22.47', 61, 3], ['买 9', '22.46', 60, 3]];
const rowHtml = r => `<div class="row"><span class="name">${r[0]}</span><span class="price-cell green">${r[1]}</span><span class="num">${r[2]}<u style="width:${r[3]}px"></u></span><b class="dot${r[4] ? ' big' : ''}"></b></div>`;
document.getElementById('sells').innerHTML = sells.map(rowHtml).join('');
document.getElementById('buys').innerHTML = buys.map(rowHtml).join('');

const deals = [[134, 'red'], [362, 'green'], [396, 'green'], [120, 'green'], [109, 'green']];
document.getElementById('deals').innerHTML = deals.map(d => `<div class="deal"><span>14:42</span><span class="green">22.55</span><span class="${d[1]}">${d[0]}</span></div>`).join('');
```
